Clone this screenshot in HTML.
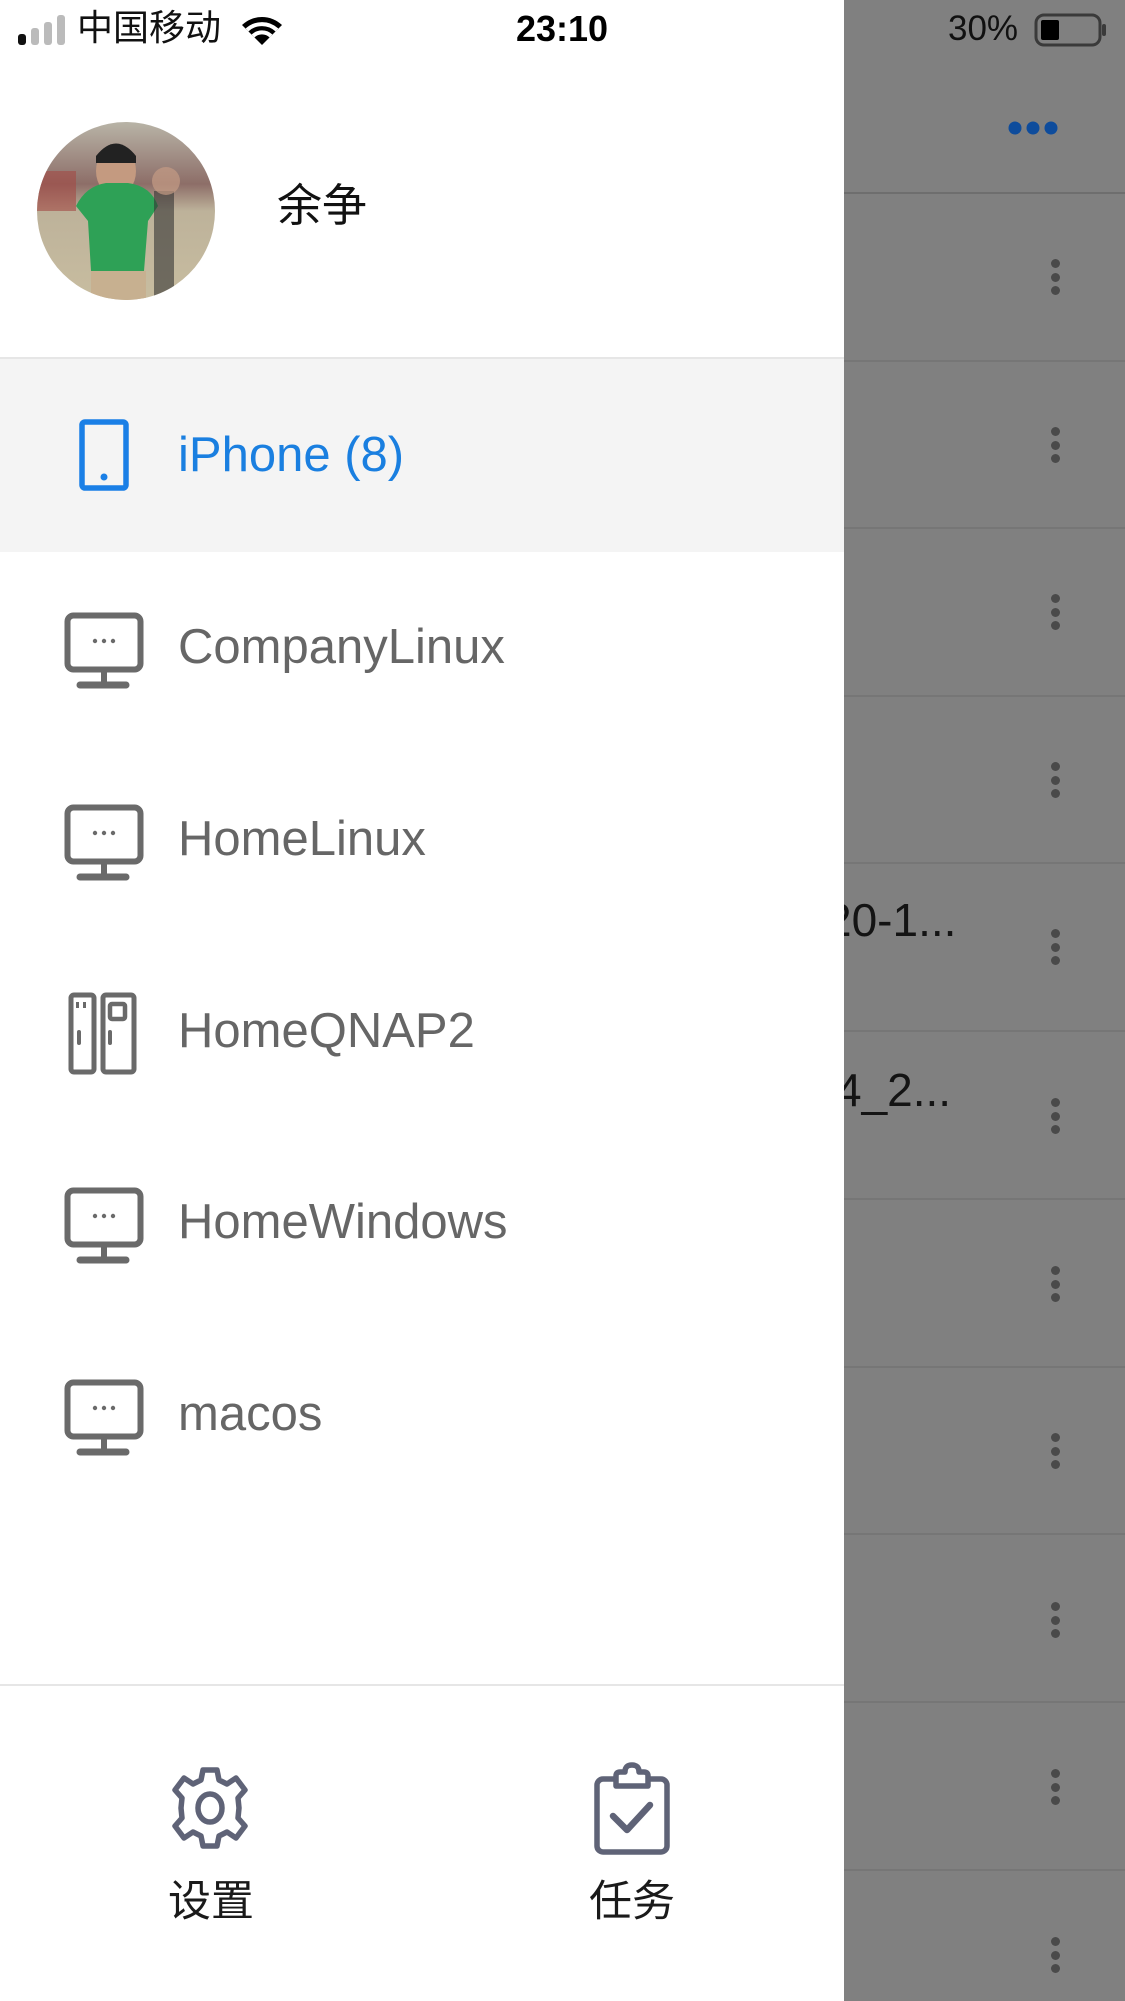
<!DOCTYPE html>
<html><head><meta charset="utf-8"><style>
*{margin:0;padding:0;box-sizing:border-box}
body{width:1125px;height:2001px;position:relative;overflow:hidden;background:#fff;font-family:"Liberation Sans","Noto Sans CJK SC",sans-serif}
.abs{position:absolute}
.right{left:844px;top:0;width:281px;height:2001px;background:#808080}
.drawer{position:absolute;left:0;top:0;width:844px;height:2001px;background:#fff;z-index:1}
.sep{position:absolute;left:844px;width:281px;height:2px;background:#767676}
.keb{position:absolute;left:1051px;width:10px}
.keb i{display:block;width:9px;height:9px;border-radius:50%;background:#4a4a4a;margin-bottom:4.5px}
.row{position:absolute;left:0;width:844px;height:192px}
.row .t{position:absolute;left:178px;font-size:49px;color:#666;line-height:1;top:71px}
.row svg{position:absolute;left:64px;top:60px}
.z{z-index:2}
</style></head><body>
<div class="abs right"></div>
<div class="sep" style="top:192px;height:2px;background:#6e6e6e"></div>
<div class="sep" style="top:360px"></div><div class="sep" style="top:527px"></div><div class="sep" style="top:695px"></div><div class="sep" style="top:862px"></div><div class="sep" style="top:1030px"></div><div class="sep" style="top:1198px"></div><div class="sep" style="top:1366px"></div><div class="sep" style="top:1533px"></div><div class="sep" style="top:1701px"></div><div class="sep" style="top:1869px"></div>
<div class="keb" style="top:259px"><i></i><i></i><i></i></div>
<div class="keb" style="top:427px"><i></i><i></i><i></i></div>
<div class="keb" style="top:594px"><i></i><i></i><i></i></div>
<div class="keb" style="top:762px"><i></i><i></i><i></i></div>
<div class="keb" style="top:929px"><i></i><i></i><i></i></div>
<div class="keb" style="top:1098px"><i></i><i></i><i></i></div>
<div class="keb" style="top:1266px"><i></i><i></i><i></i></div>
<div class="keb" style="top:1433px"><i></i><i></i><i></i></div>
<div class="keb" style="top:1602px"><i></i><i></i><i></i></div>
<div class="keb" style="top:1769px"><i></i><i></i><i></i></div>
<div class="keb" style="top:1937px"><i></i><i></i><i></i></div>
<svg class="abs" style="left:1007px;top:120px" width="54" height="16"><circle cx="8" cy="8" r="6.5" fill="#0e4c9c"/><circle cx="26" cy="8" r="6.5" fill="#0e4c9c"/><circle cx="44" cy="8" r="6.5" fill="#0e4c9c"/></svg>
<div class="abs" style="left:826px;top:897px;font-size:46px;color:#141414;line-height:1">20-1...</div>
<div class="abs" style="left:836px;top:1067px;font-size:46px;color:#141414;line-height:1">4_2...</div>
<div class="drawer"></div>
<!-- status bar -->
<svg class="abs z" style="left:17px;top:14px" width="50" height="32"><rect x="1" y="20" width="8" height="11" rx="3" fill="#111"/><rect x="14" y="14" width="8" height="17" rx="3" fill="#bbb"/><rect x="27" y="8" width="8" height="23" rx="3" fill="#bbb"/><rect x="40" y="1" width="8" height="30" rx="3" fill="#bbb"/></svg>
<div class="abs z" style="left:77px;top:10px;font-size:36px;color:#111;line-height:1">中国移动</div>
<svg class="abs z" style="left:240px;top:14px" width="44" height="32" viewBox="0 0 44 32"><path d="M22 31 L2 11 A29 29 0 0 1 42 11 Z" fill="#000"/><path d="M7 16 A22 22 0 0 1 37 16" stroke="#fff" stroke-width="4" fill="none"/><path d="M13 22 A13 13 0 0 1 31 22" stroke="#fff" stroke-width="4" fill="none"/></svg>
<div class="abs z" style="left:516px;top:11px;font-size:36px;color:#000;font-weight:bold;line-height:1">23:10</div>
<div class="abs" style="left:948px;top:11px;font-size:35px;color:#111;line-height:1">30%</div>
<svg class="abs" style="left:1034px;top:13px" width="74" height="34"><rect x="2" y="2" width="64" height="30" rx="8" fill="none" stroke="#3a3a3a" stroke-width="3"/><rect x="7" y="7" width="18" height="20" rx="2" fill="#000"/><rect x="68" y="11" width="4" height="12" rx="2" fill="#3a3a3a"/></svg>
<!-- header -->
<svg class="abs z" style="left:36px;top:121px" width="180" height="180" viewBox="0 0 180 180"><defs><clipPath id="c"><circle cx="90" cy="90" r="89"/></clipPath><linearGradient id="bg" x1="0" y1="0" x2="0" y2="1"><stop offset="0" stop-color="#b9b5a8"/><stop offset=".35" stop-color="#8d6e68"/><stop offset=".5" stop-color="#bdb29a"/><stop offset="1" stop-color="#c8bda0"/></linearGradient></defs><g clip-path="url(#c)"><rect width="180" height="180" fill="url(#bg)"/><rect x="0" y="50" width="40" height="40" fill="#a34a44" opacity=".6"/><ellipse cx="80" cy="50" rx="20" ry="25" fill="#c49a80"/><path d="M60 35 Q80 10 100 35 L100 42 L60 42Z" fill="#222"/><path d="M40 85 Q50 65 70 62 L92 62 Q115 65 122 85 L112 100 L108 150 L55 150 L52 100 Z" fill="#2ea156"/><rect x="55" y="150" width="55" height="30" fill="#c7b090"/><rect x="118" y="70" width="20" height="110" fill="#333" opacity=".6"/><circle cx="130" cy="60" r="14" fill="#c59b84" opacity=".7"/></g></svg>
<div class="abs z" style="left:277px;top:183px;font-size:45px;color:#111;line-height:1">余争</div>
<div class="abs z" style="left:0;top:357px;width:844px;height:2px;background:#e6e6e6"></div>
<!-- rows -->
<div class="row z" style="top:359px;background:#f4f4f4;height:193px">
<svg style="left:79px;top:60px" width="52" height="74" viewBox="0 0 52 74"><rect x="3" y="3" width="44" height="66" rx="3" fill="none" stroke="#1a7fe6" stroke-width="5.5"/><circle cx="25" cy="58" r="3.5" fill="#1a7fe6"/></svg>
<div class="t" style="color:#1a7fe0;top:72px">iPhone (8)</div></div>
<div class="row z" style="top:552px"><svg width="84" height="80" viewBox="0 0 84 80"><rect x="3.5" y="3.5" width="73" height="54" rx="6" fill="none" stroke="#6a6a6a" stroke-width="6"/><line x1="40" y1="58" x2="40" y2="70" stroke="#6a6a6a" stroke-width="6"/><line x1="16" y1="73" x2="62" y2="73" stroke="#6a6a6a" stroke-width="7" stroke-linecap="round"/><circle cx="31" cy="29" r="2.2" fill="#6a6a6a"/><circle cx="40" cy="29" r="2.2" fill="#6a6a6a"/><circle cx="49" cy="29" r="2.2" fill="#6a6a6a"/></svg><div class="t">CompanyLinux</div></div>
<div class="row z" style="top:744px"><svg width="84" height="80" viewBox="0 0 84 80"><rect x="3.5" y="3.5" width="73" height="54" rx="6" fill="none" stroke="#6a6a6a" stroke-width="6"/><line x1="40" y1="58" x2="40" y2="70" stroke="#6a6a6a" stroke-width="6"/><line x1="16" y1="73" x2="62" y2="73" stroke="#6a6a6a" stroke-width="7" stroke-linecap="round"/><circle cx="31" cy="29" r="2.2" fill="#6a6a6a"/><circle cx="40" cy="29" r="2.2" fill="#6a6a6a"/><circle cx="49" cy="29" r="2.2" fill="#6a6a6a"/></svg><div class="t">HomeLinux</div></div>
<div class="row z" style="top:936px"><svg style="left:68px;top:56px" width="72" height="84" viewBox="0 0 72 84"><rect x="3" y="3" width="23" height="77" rx="3" fill="none" stroke="#6a6a6a" stroke-width="5"/><rect x="35" y="3" width="31" height="77" rx="3" fill="none" stroke="#6a6a6a" stroke-width="5"/><rect x="8" y="10" width="3" height="6" fill="#6a6a6a"/><rect x="15" y="10" width="3" height="6" fill="#6a6a6a"/><rect x="9" y="38" width="4" height="15" rx="2" fill="#6a6a6a"/><rect x="40" y="38" width="4" height="15" rx="2" fill="#6a6a6a"/><rect x="42" y="12" width="15" height="15" rx="2" fill="none" stroke="#6a6a6a" stroke-width="4.5"/></svg><div class="t">HomeQNAP2</div></div>
<div class="row z" style="top:1127px"><svg width="84" height="80" viewBox="0 0 84 80"><rect x="3.5" y="3.5" width="73" height="54" rx="6" fill="none" stroke="#6a6a6a" stroke-width="6"/><line x1="40" y1="58" x2="40" y2="70" stroke="#6a6a6a" stroke-width="6"/><line x1="16" y1="73" x2="62" y2="73" stroke="#6a6a6a" stroke-width="7" stroke-linecap="round"/><circle cx="31" cy="29" r="2.2" fill="#6a6a6a"/><circle cx="40" cy="29" r="2.2" fill="#6a6a6a"/><circle cx="49" cy="29" r="2.2" fill="#6a6a6a"/></svg><div class="t">HomeWindows</div></div>
<div class="row z" style="top:1319px"><svg width="84" height="80" viewBox="0 0 84 80"><rect x="3.5" y="3.5" width="73" height="54" rx="6" fill="none" stroke="#6a6a6a" stroke-width="6"/><line x1="40" y1="58" x2="40" y2="70" stroke="#6a6a6a" stroke-width="6"/><line x1="16" y1="73" x2="62" y2="73" stroke="#6a6a6a" stroke-width="7" stroke-linecap="round"/><circle cx="31" cy="29" r="2.2" fill="#6a6a6a"/><circle cx="40" cy="29" r="2.2" fill="#6a6a6a"/><circle cx="49" cy="29" r="2.2" fill="#6a6a6a"/></svg><div class="t">macos</div></div>
<!-- footer -->
<div class="abs z" style="left:0;top:1684px;width:844px;height:2px;background:#e6e6e6"></div>
<svg class="abs z" style="left:167px;top:1765px" width="86" height="86" viewBox="-43 -43 86 86"><path d="M-7 -38 L7 -38 L9 -28 L17 -24 L26 -30 L35 -18 L28 -10 L29 0 L28 10 L35 18 L26 30 L17 24 L9 28 L7 38 L-7 38 L-9 28 L-17 24 L-26 30 L-35 18 L-28 10 L-29 0 L-28 -10 L-35 -18 L-26 -30 L-17 -24 L-9 -28 Z" fill="none" stroke="#5f6377" stroke-width="5.5" stroke-linejoin="round"/><ellipse cx="0" cy="0" rx="12" ry="14" fill="none" stroke="#5f6377" stroke-width="5.5"/></svg>
<div class="abs z" style="left:168px;top:1881px;font-size:43px;color:#1a1a1a;line-height:1">设置</div>
<svg class="abs z" style="left:594px;top:1762px" width="78" height="94" viewBox="0 0 78 94"><rect x="3" y="17" width="70" height="73" rx="6" fill="none" stroke="#5f6377" stroke-width="5.5"/><path d="M22 24 L22 14 Q22 10 26 10 L31 10 Q31 3 38 3 Q45 3 45 10 L50 10 Q54 10 54 14 L54 24 Z" fill="#fff" stroke="#5f6377" stroke-width="5.5" stroke-linejoin="round"/><path d="M19 54 L33 68 L56 43" fill="none" stroke="#5f6377" stroke-width="6.5" stroke-linecap="round" stroke-linejoin="round"/></svg>
<div class="abs z" style="left:589px;top:1881px;font-size:43px;color:#1a1a1a;line-height:1">任务</div>
</body></html>
